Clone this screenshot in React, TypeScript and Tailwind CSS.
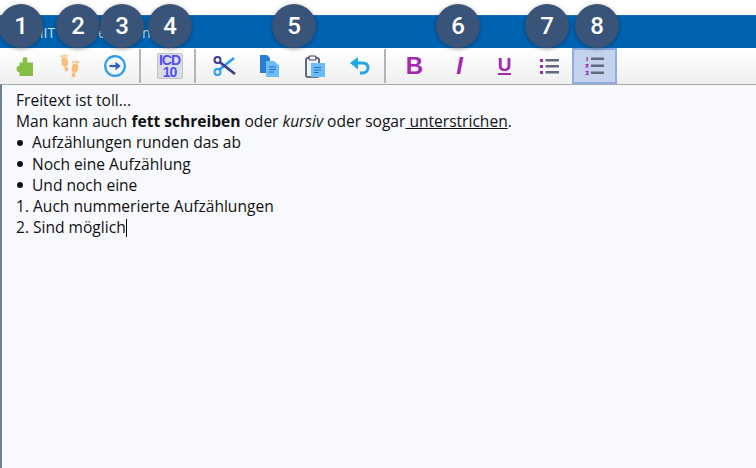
import { ReactNode } from 'react';

// numbered callouts sitting on top of the window
const callouts = [
  { n: 1, left: 'left-[-1px]' },
  { n: 2, left: 'left-[56px]' },
  { n: 3, left: 'left-[100px]' },
  { n: 4, left: 'left-[148px]' },
  { n: 5, left: 'left-[272px]' },
  { n: 6, left: 'left-[436px]' },
  { n: 7, left: 'left-[525px]' },
  { n: 8, left: 'left-[575px]' },
];

function Tool({ active, children }: { active?: boolean; children: ReactNode }) {
  return (
    <div
      className={`w-[45px] h-full shrink-0 flex items-center justify-center ${
        active ? 'bg-[#c3d3ee] border-2 border-[#8fade3]' : ''
      }`}
    >
      {children}
    </div>
  );
}

function Sep() {
  return <div className="w-[2px] h-[34px] shrink-0 bg-[#b4b4b4] ml-[2px] mr-[6px]" />;
}

function Puzzle() {
  return (
    <svg width="18" height="21" viewBox="0 0 18 21">
      <path
        d="M5 6.500h2C6 4.500 6.500 1 9 1s3 3.500 2 5.500h6V20H3.500v-4C2 16.500.5 15.500.5 13S2 9.500 3.500 10V6.500z"
        fill="#86bd45"
      />
    </svg>
  );
}

function Feet() {
  return (
    <svg width="22" height="24" viewBox="0 0 22 24" fill="#f5bd78">
      <ellipse cx="5.800" cy="8" rx="3.200" ry="4.800" transform="rotate(-8 5.800 8)" />
      <ellipse cx="7.500" cy="15" rx="2" ry="2.200" />
      <circle cx="2.800" cy="2.200" r="1.200" />
      <circle cx="5.500" cy="1.600" r="1.100" />
      <circle cx="8" cy="2" r="1" />
      <ellipse cx="16" cy="14" rx="3.200" ry="4.800" transform="rotate(8 16 14)" />
      <ellipse cx="14.500" cy="21" rx="2" ry="2.200" />
      <circle cx="19" cy="8.200" r="1.200" />
      <circle cx="16.500" cy="7.600" r="1.100" />
      <circle cx="14" cy="8" r="1" />
    </svg>
  );
}

function ArrowCircle() {
  return (
    <svg width="22" height="22" viewBox="0 0 22 22" fill="none">
      <circle cx="11" cy="11" r="9.800" stroke="#2b9cf2" strokeWidth="2.200" />
      <path d="M5.500 11h8" stroke="#2a62b8" strokeWidth="2.200" />
      <path d="M11.500 6.800 16.800 11l-5.300 4.200z" fill="#2a62b8" />
    </svg>
  );
}

function Icd() {
  return (
    <div className="w-[26px] h-[26px] rounded-[2px] bg-[#dcdce4] border border-[#c4c4c8] flex flex-col items-center justify-center font-['Liberation_Sans',sans-serif] font-bold text-[14px] tracking-[-1px] leading-[12px] text-[#4f4ff2]">
      <span>ICD</span>
      <span>10</span>
    </div>
  );
}

function Scissors() {
  return (
    <svg width="23" height="20" viewBox="0 0 23 20" fill="none">
      <path d="M6.500 13.500 21 2" stroke="#2b9cf2" strokeWidth="2.800" />
      <path d="M6.500 6 22 18" stroke="#3b3d8c" strokeWidth="2.800" />
      <circle cx="4.500" cy="4" r="3" stroke="#3b3d8c" strokeWidth="2" />
      <circle cx="4.500" cy="16" r="3" stroke="#2b9cf2" strokeWidth="2" />
    </svg>
  );
}

function Copy() {
  return (
    <svg width="20" height="23" viewBox="0 0 20 23">
      <path d="M0 0h7l3 3v15H0z" fill="#2a7cd6" />
      <path d="M6 6h8l5 4.500V22H6z" fill="#6cbcf7" />
      <path d="M9 12h7M9 14.500h7M9 17h5" stroke="#2a6cc0" strokeWidth="1.200" />
    </svg>
  );
}

function Paste() {
  return (
    <svg width="20" height="23" viewBox="0 0 20 23">
      <rect x="1" y="3" width="13" height="19" rx="1.500" fill="#f4f4f6" stroke="#3f4660" strokeWidth="1.600" />
      <rect x="4" y="1" width="7" height="4" rx="1" fill="#f4f4f6" stroke="#3f4660" strokeWidth="1.200" />
      <path d="M6 8h14v14H6z" fill="#6cbcf7" />
      <path d="M9 12.500h7M9 15h7M9 17.500h5" stroke="#2a6cc0" strokeWidth="1.200" />
    </svg>
  );
}

function Undo() {
  return (
    <svg width="20" height="18" viewBox="0 0 20 18" fill="none">
      <path d="M8 0 0 6l8 6.500z" fill="#1fa8e6" />
      <path d="M6 6h6.500c3.500 0 5.500 2 5.500 4.800s-2 5.200-5.500 5.200H10" stroke="#1fa8e6" strokeWidth="3" />
    </svg>
  );
}

function Bold() {
  return <span className="font-['Liberation_Sans',sans-serif] font-bold text-[24px] leading-none text-[#a428b0]">B</span>;
}

function Italic() {
  return <span className="font-['Liberation_Sans',sans-serif] font-bold italic text-[24px] leading-none text-[#a428b0]">I</span>;
}

function Underline() {
  return (
    <span className="font-['Liberation_Sans',sans-serif] font-bold text-[19px] leading-[16px] text-[#a428b0] border-b-2 border-[#a428b0]">
      U
    </span>
  );
}

function BulletList() {
  return (
    <svg width="19" height="17" viewBox="0 0 19 17">
      <path d="M0 1h3v3H0zM0 7h3v3H0zM0 13h3v3H0z" fill="#a428b0" />
      <path d="M5.500 1h13.500v2.500H5.500zM5.500 7h13.500v2.500H5.500zM5.500 13h13.500v2.500H5.500z" fill="#5f6b7c" />
    </svg>
  );
}

function NumberList() {
  return (
    <svg width="20" height="20" viewBox="0 0 20 20">
      <path d="M1.500 1h1.200v4H1.500zM0.500 8h3v1.200l-1.500 1.300h1.500v1h-3v-1l1.500-1.300H.5zM.5 15h3v4h-3v-1h2v-.5h-1.500v-1h1.500V16h-2z" fill="#a428b0" />
      <path d="M6 1.500h13V4H6zM6 8.500h13V11H6zM6 15.500h13V18H6z" fill="#5f6b7c" />
    </svg>
  );
}

function Bullet({ children }: { children: ReactNode }) {
  return (
    <div className="flex items-center">
      <span className="w-[6px] h-[6px] rounded-full bg-[#111111] ml-[1px] mr-[9px]" />
      {children}
    </div>
  );
}

export default function App() {
  return (
    <div className="relative w-[756px] h-[468px] overflow-hidden bg-white font-['Open_Sans',sans-serif]">
      <div className="h-[15px]" />
      {/* title bar */}
      <div className="h-[33px] bg-[#0063b1] border-t border-[#1d6fb5] flex items-center pl-[31px] text-[14px] text-[#cfe0f0]">
        <span className="w-[67px]">MIT</span>
        <span className="w-[44px]">e</span>
        <span>ne</span>
      </div>
      {/* toolbar */}
      <div className="h-[36px] flex items-center pl-[2px] bg-gradient-to-b from-[#ffffff] to-[#efefef]">
        <Tool><Puzzle /></Tool>
        <Tool><Feet /></Tool>
        <Tool><ArrowCircle /></Tool>
        <Sep />
        <Tool><Icd /></Tool>
        <Sep />
        <Tool><Scissors /></Tool>
        <Tool><Copy /></Tool>
        <Tool><Paste /></Tool>
        <Tool><Undo /></Tool>
        <Sep />
        <Tool><Bold /></Tool>
        <Tool><Italic /></Tool>
        <Tool><Underline /></Tool>
        <Tool><BulletList /></Tool>
        <Tool active><NumberList /></Tool>
      </div>
      {/* editor */}
      <div className="h-[384px] border-t-[1px] border-l-[2px] border-t-[#a9a9a9] border-l-[#667f9a] bg-[#f8f9fd] pl-[14px] pt-[5px] text-[15.570px] leading-[21.200px] text-[#111111]">
        <div>Freitext ist toll...</div>
        <div>
          Man kann auch <b>fett schreiben</b> oder <i>kursiv</i> oder sogar<u> unterstrichen</u>.
        </div>
        <Bullet>Aufzählungen runden das ab</Bullet>
        <Bullet>Noch eine Aufzählung</Bullet>
        <Bullet>Und noch eine</Bullet>
        <div>1. Auch nummerierte Aufzählungen</div>
        <div className="flex items-center">
          2. Sind möglich
          <span className="w-[1px] h-[18px] bg-black" />
        </div>
      </div>
      {/* callouts */}
      {callouts.map((c) => (
        <div
          key={c.n}
          className={`absolute top-[4px] ${c.left} w-[44px] h-[44px] rounded-full bg-[#3a5378] shadow-[0_1px_4px_rgba(0,0,0,0.35)] flex items-center justify-center text-white text-[24px] font-['Roboto',sans-serif] font-medium`}
        >
          {c.n}
        </div>
      ))}
    </div>
  );
}
